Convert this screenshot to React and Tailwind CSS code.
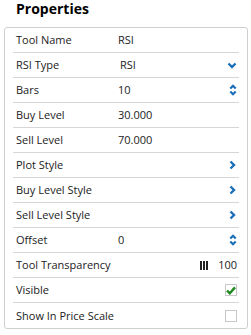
import React from 'react';

const ChevronDown = () => (
  <svg width="10" height="7" viewBox="0 0 10 7" className="block">
    <path d="M1.5 1.5 L5 5 L8.5 1.5" fill="none" stroke="#1b6fb8" strokeWidth="2.4" />
  </svg>
);

const ChevronRight = () => (
  <svg width="7" height="10" viewBox="0 0 7 10" className="block">
    <path d="M1.5 1.5 L5 5 L1.5 8.5" fill="none" stroke="#1b6fb8" strokeWidth="2.4" />
  </svg>
);

const Spinner = () => (
  <svg width="8" height="12" viewBox="0 0 8 12" className="block">
    <path d="M1.3 4.5 L4 1.8 L6.7 4.5" fill="none" stroke="#1b6fb8" strokeWidth="2.2" />
    <path d="M1.3 7.5 L4 10.2 L6.7 7.5" fill="none" stroke="#1b6fb8" strokeWidth="2.2" />
  </svg>
);

const Bars3 = () => (
  <svg width="8" height="9" viewBox="0 0 8 9" className="block">
    <rect x="0" y="0" width="2" height="9" fill="#222" />
    <rect x="3" y="0" width="2" height="9" fill="#222" />
    <rect x="6" y="0" width="2" height="9" fill="#222" />
  </svg>
);

const CheckBox = ({ checked }) => (
  <div className="w-[12px] h-[12px] border border-[#c8c8c8] bg-white flex items-center justify-center">
    {checked && (
      <svg width="10" height="9" viewBox="0 0 10 9" className="block">
        <path d="M1 4.6 L3.8 7.2 L9 1.4" fill="none" stroke="#1e8a1e" strokeWidth="2.4" />
      </svg>
    )}
  </div>
);

const rows = [
  { label: 'Tool Name', value: 'RSI' },
  { label: 'RSI Type', value: 'RSI', icon: 'down', indent: true },
  { label: 'Bars', value: '10', icon: 'spin' },
  { label: 'Buy Level', value: '30.000' },
  { label: 'Sell Level', value: '70.000' },
  { label: 'Plot Style', icon: 'right' },
  { label: 'Buy Level Style', icon: 'right' },
  { label: 'Sell Level Style', icon: 'right' },
  { label: 'Offset', value: '0', icon: 'spin' },
  { label: 'Tool Transparency', icon: 'transp' },
  { label: 'Visible', icon: 'checked' },
  { label: 'Show In Price Scale', icon: 'unchecked' },
];

function RowIcon({ type }) {
  if (type === 'down') return <div className="pr-[2px]"><ChevronDown /></div>;
  if (type === 'right') return <div className="pr-[3px]"><ChevronRight /></div>;
  if (type === 'spin') return <div className="pr-[2px]"><Spinner /></div>;
  if (type === 'checked') return <div className="pr-[2px]"><CheckBox checked /></div>;
  if (type === 'unchecked') return <div className="pr-[2px]"><CheckBox /></div>;
  if (type === 'transp')
    return (
      <div className="flex items-center gap-[10px] pr-[2px]">
        <Bars3 />
        <span>100</span>
      </div>
    );
  return null;
}

export default function App() {
  return (
    <div className="w-[251px] h-[335px] bg-white text-[#222] font-['Open_Sans',sans-serif]">
      <h1 className="pl-[16px] text-[14px] font-bold leading-[18px] text-black">Properties</h1>
      <div className="ml-[4px] mt-[9px] w-[244px] border border-[#cfcfcf] rounded-[3px] px-[8px]">
        {rows.map((row, i) => (
          <div
            key={row.label}
            className={`flex items-center h-[25px] text-[11px] leading-[24px] ${i < rows.length - 1 ? 'border-b border-[#d6d6d6]' : ''}`}
          >
            <span className="w-[105px] pl-[3px] shrink-0 whitespace-nowrap">{row.label}</span>
            <span className={`flex-1 ${row.indent ? 'pl-[2px]' : ''}`}>{row.value}</span>
            <RowIcon type={row.icon} />
          </div>
        ))}
      </div>
    </div>
  );
}
